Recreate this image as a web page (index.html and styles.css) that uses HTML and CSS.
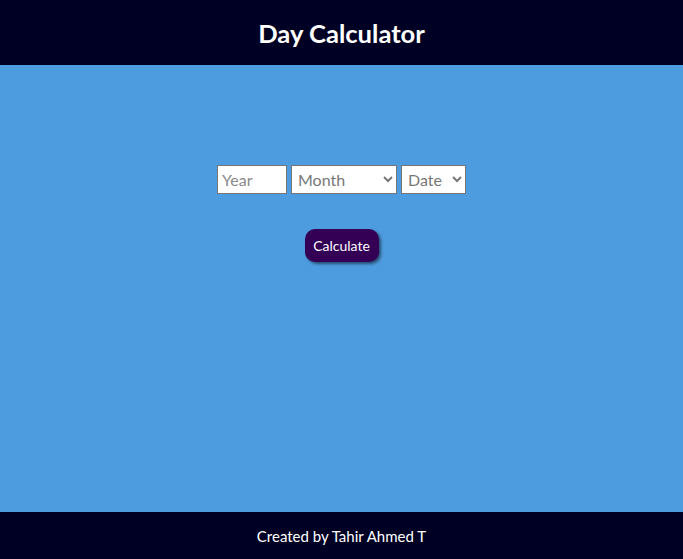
FILE: index.html
```html
<!DOCTYPE html>
<html>
<head>
<meta charset="utf-8">
<link rel="stylesheet" href="styles.css">
</head>
<body>
<div class="page">
  <header class="header"><h1 class="title">Day Calculator</h1></header>
  <main class="main">
    <div class="inputs">
      <input class="field year" type="text" placeholder="Year">
      <select class="field month"><option>Month</option></select>
      <select class="field date"><option>Date</option></select>
    </div>
    <button class="calc">Calculate</button>
  </main>
  <footer class="footer">Created by Tahir Ahmed T</footer>
</div>
</body>
</html>
```
FILE: styles.css
```css
html, body { margin: 0; padding: 0; }
body { font-family: Lato, "Liberation Sans", sans-serif; background: #4d9ce0; }
.page { display: flex; flex-direction: column; height: 559px; }
.header { background: #000024; height: 65px; display: flex; align-items: center; justify-content: center; }
.title { margin: 0; color: #fff; font-size: 25.6px; font-weight: 700; }
.main { flex: 1; background: #4d9ce0; display: flex; flex-direction: column; align-items: center; padding-top: 100px; }
.inputs { display: flex; gap: 4px; }
.field { box-sizing: border-box; height: 29px; font-family: Lato, "Liberation Sans", sans-serif; font-size: 16px; color: #777; border: 1px solid #767676; background: #fff; border-radius: 0; padding: 0 4px; }
.field::placeholder { color: #8a8a8a; }
.year { width: 70px; }
.month { width: 106px; padding-left: 2px; }
.date { width: 65px; padding-left: 2px; }
.calc { margin-top: 35px; width: 74px; height: 33px; background: #330055; color: #fff; border: none; border-radius: 10px; font-family: Lato, "Liberation Sans", sans-serif; font-size: 14px; box-shadow: 2px 2px 3px rgba(0,0,0,0.5); padding: 0; }
.footer { background: #000024; height: 47px; display: flex; align-items: center; justify-content: center; color: #fff; font-size: 15px; }
```
